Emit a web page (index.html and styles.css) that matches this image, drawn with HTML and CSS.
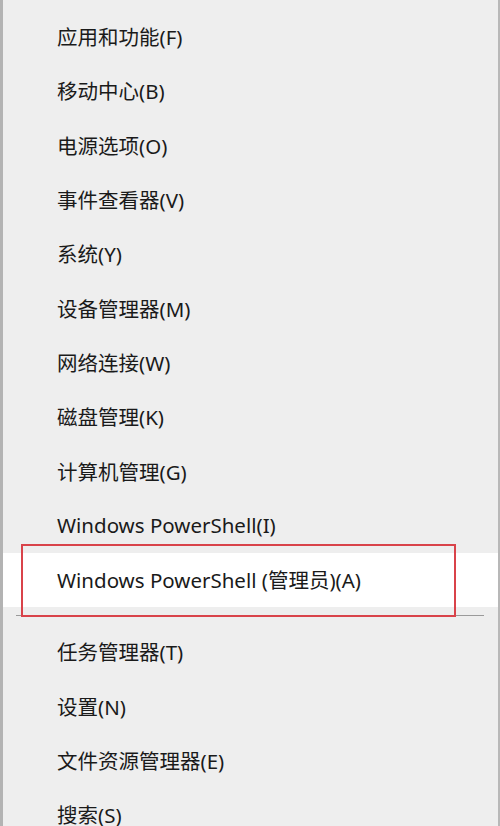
FILE: index.html
```html
<!DOCTYPE html>
<html>
  <head>
    <meta charset="utf-8">
    <meta name="viewport" content="width=device-width, initial-scale=1.0">
    <link rel="stylesheet" href="styles.css">
  </head>
  <body>
    <div class="menu">
      <div class="item">应用和功能(F)</div>
      <div class="item">移动中心(B)</div>
      <div class="item">电源选项(O)</div>
      <div class="item">事件查看器(V)</div>
      <div class="item">系统(Y)</div>
      <div class="item">设备管理器(M)</div>
      <div class="item">网络连接(W)</div>
      <div class="item">磁盘管理(K)</div>
      <div class="item">计算机管理(G)</div>
      <div class="item">Windows PowerShell(I)</div>
      <div class="item active"><span>Windows PowerShell (管理员)(A)</span><div class="mark"></div></div>
      <div class="separator"></div>
      <div class="item">任务管理器(T)</div>
      <div class="item">设置(N)</div>
      <div class="item">文件资源管理器(E)</div>
      <div class="item">搜索(S)</div>
    </div>
  </body>
</html>
```

FILE: styles.css
```css
/* Page */
body {
  margin: 0;
  background-color: #eeeeee;
  font-family: "Noto Sans", "Noto Sans CJK SC", sans-serif;
}

/* Menu styles */
.menu {
  width: 500px;
  box-sizing: border-box;
  min-height: 826px;
  padding-top: 10px;
  background-color: #eeeeee;
  border-left: 3px solid #b3b3b3;
  border-right: 2px solid #b8b8b8;
}

/* Item styles */
.item {
  position: relative;
  height: 54.3px;
  display: flex;
  align-items: center;
  padding-left: 54px;
  padding-bottom: 2px;
  box-sizing: border-box;
  font-size: 20.5px;
  color: #1a1a1a;
  white-space: nowrap;
}

.item.active {
  background-color: #ffffff;
}

/* Red highlight box */
.mark {
  position: absolute;
  left: 18px;
  top: -9px;
  width: 435px;
  height: 73px;
  box-sizing: border-box;
  border: 2px solid #d9434a;
}

/* Separator */
.separator {
  height: 1px;
  margin: 8px 14px 9px 13px;
  background-color: #9a9a9a;
}
```
